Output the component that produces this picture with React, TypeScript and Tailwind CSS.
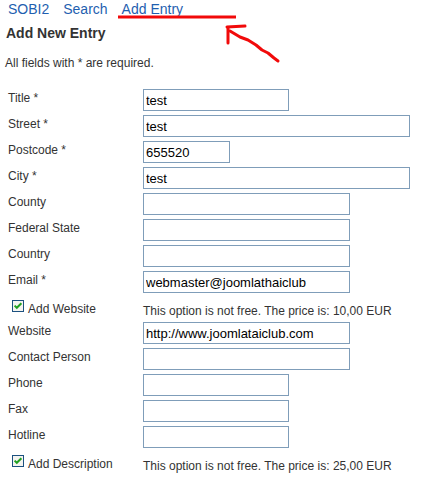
import React from "react";

type Field = { label: string; width: string; value?: string };

// rows of the entry form, widths measured off the picture
const topFields: Field[] = [
  { label: "Title *", width: "w-[146px]", value: "test" },
  { label: "Street *", width: "w-[267px]", value: "test" },
  { label: "Postcode *", width: "w-[87px]", value: "655520" },
  { label: "City *", width: "w-[267px]", value: "test" },
  { label: "County", width: "w-[207px]" },
  { label: "Federal State", width: "w-[207px]" },
  { label: "Country", width: "w-[207px]" },
  { label: "Email *", width: "w-[207px]", value: "webmaster@joomlathaiclub" },
];

const midFields: Field[] = [
  { label: "Website", width: "w-[207px]", value: "http://www.joomlataiclub.com" },
  { label: "Contact Person", width: "w-[207px]" },
  { label: "Phone", width: "w-[146px]" },
  { label: "Fax", width: "w-[146px]" },
  { label: "Hotline", width: "w-[146px]" },
];

function CheckBox() {
  return (
    <svg width="12" height="12" viewBox="0 0 12 12" className="shrink-0">
      <rect x="0.5" y="0.5" width="11" height="11" fill="#f4f4f0" stroke="#1c5180" />
      <path d="M2.6 5.6 L4.8 7.8 L9.4 3.2" fill="none" stroke="#21a121" strokeWidth="2" />
    </svg>
  );
}

function FieldRow({ field }: { field: Field }) {
  return (
    <div className="flex h-[22px] items-start">
      <div className="w-[135px] pt-[2px] text-[12px] leading-[14px] text-[#333]">{field.label}</div>
      <input
        readOnly
        value={field.value ?? ""}
        className={`${field.width} h-[22px] border border-[#7f9db9] bg-white px-[2px] text-[13px] text-black outline-none`}
      />
    </div>
  );
}

function OptionRow({ label, price }: { label: string; price: string }) {
  return (
    <div className="flex h-[21px] items-start">
      <div className="flex w-[135px] items-start pl-[4px]">
        <div className="mt-[3px]">
          <CheckBox />
        </div>
        <span className="ml-[4px] mt-[5px] text-[12px] leading-[14px] text-[#333]">{label}</span>
      </div>
      <span className="mt-[7px] text-[12px] leading-[14px] text-[#333]">
        This option is not free. The price is: {price}
      </span>
    </div>
  );
}

export default function App() {
  return (
    <div className="relative h-[477px] w-[436px] overflow-hidden bg-white font-['Liberation_Sans',Arial,sans-serif]">
      <nav className="flex gap-[14px] pl-[8px] text-[14px] leading-[18px] text-[#1f5fb0]">
        <a href="#">SOBI2</a>
        <a href="#">Search</a>
        <a href="#">Add Entry</a>
      </nav>

      {/* red marker scribble over the nav */}
      <svg className="pointer-events-none absolute left-0 top-0" width="436" height="80">
        <path d="M118 17 L236 17" stroke="#f10a0a" strokeWidth="3" fill="none" />
        <path d="M227 27 L245 26" stroke="#f10a0a" strokeWidth="3" fill="none" strokeLinecap="round" />
        <path d="M228 28 L228 43" stroke="#f10a0a" strokeWidth="3" fill="none" strokeLinecap="round" />
        <path
          d="M230 31 L240 37 L248 40 L256 45 L262 50 L268 53 L274 58 L278 61"
          stroke="#f10a0a"
          strokeWidth="3"
          fill="none"
          strokeLinecap="round"
          strokeLinejoin="round"
        />
      </svg>

      <h1 className="mt-[6px] pl-[6px] text-[14px] font-bold leading-[18px] text-[#333]">Add New Entry</h1>
      <p className="mt-[14px] pl-[5px] text-[12px] leading-[14px] text-[#333]">All fields with * are required.</p>

      <form className="mt-[19px] flex flex-col gap-[4px] pl-[8px]">
        {topFields.map((f) => (
          <FieldRow key={f.label} field={f} />
        ))}
        <OptionRow label="Add Website" price="10,00 EUR" />
        {midFields.map((f) => (
          <FieldRow key={f.label} field={f} />
        ))}
        <OptionRow label="Add Description" price="25,00 EUR" />
      </form>
    </div>
  );
}
